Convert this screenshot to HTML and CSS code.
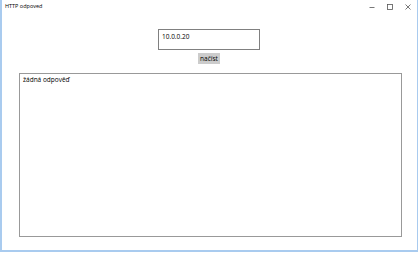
FILE: index.html
```html
<!DOCTYPE html>
<html>
<head>
<meta charset="utf-8">
<link rel="stylesheet" href="styles.css">
</head>
<body>
<div class="window">
  <div class="titlebar">
    <span class="title">HTTP odpoved</span>
    <div class="controls">
      <svg class="ctl" width="8" height="8" viewBox="0 0 8 8"><line x1="1.5" y1="4.5" x2="6.5" y2="4.5" stroke="#555" stroke-width="0.8"/></svg>
      <svg class="ctl" width="8" height="8" viewBox="0 0 8 8"><rect x="1.5" y="1.5" width="5" height="5" fill="none" stroke="#555" stroke-width="0.8"/></svg>
      <svg class="ctl" width="8" height="8" viewBox="0 0 8 8"><path d="M1.5 1.5 L6.5 6.5 M6.5 1.5 L1.5 6.5" stroke="#555" stroke-width="0.8"/></svg>
    </div>
  </div>
  <div class="content">
    <div class="input">10.0.0.20</div>
    <div class="button">načíst</div>
    <div class="output">žádná odpověď</div>
  </div>
</div>
</body>
</html>
```
FILE: styles.css
```css
html, body {
  margin: 0;
  padding: 0;
  background: #ffffff;
}
body {
  width: 419px;
  height: 253px;
  overflow: hidden;
  font-family: "Open Sans", "Noto Sans", sans-serif;
  color: #000;
}
.window {
  box-sizing: border-box;
  width: 418px;
  height: 252px;
  border-left: 2px solid #a9cbef;
  border-right: 1px solid #a9cbef;
  border-bottom: 2px solid #a9cbef;
  display: flex;
  flex-direction: column;
  background: #fff;
}
.titlebar {
  height: 14px;
  display: flex;
  align-items: center;
  justify-content: space-between;
  padding-left: 3px;
}
.title {
  font-size: 5.5px;
  line-height: 14px;
  margin-top: -2px;
}
.controls {
  display: flex;
  gap: 10px;
  padding-right: 5px;
  margin-top: -1px;
}
.ctl {
  display: block;
}
.content {
  display: flex;
  flex-direction: column;
  align-items: flex-start;
  padding-top: 15px;
}
.input {
  box-sizing: border-box;
  width: 102px;
  height: 21px;
  border: 1px solid #808080;
  font-size: 6.5px;
  padding: 3px 0 0 3px;
  line-height: 8px;
  margin-left: 156px;
}
.button {
  margin-top: 3px;
  box-sizing: border-box;
  width: 22px;
  height: 11px;
  background: #cccccc;
  font-size: 6.5px;
  line-height: 11px;
  text-align: center;
  margin-left: 196px;
}
.output {
  margin-top: 9px;
  box-sizing: border-box;
  width: 383px;
  height: 164px;
  border: 1px solid #999999;
  font-size: 6.5px;
  line-height: 8px;
  padding: 2px 0 0 3px;
  margin-left: 17px;
}
```
